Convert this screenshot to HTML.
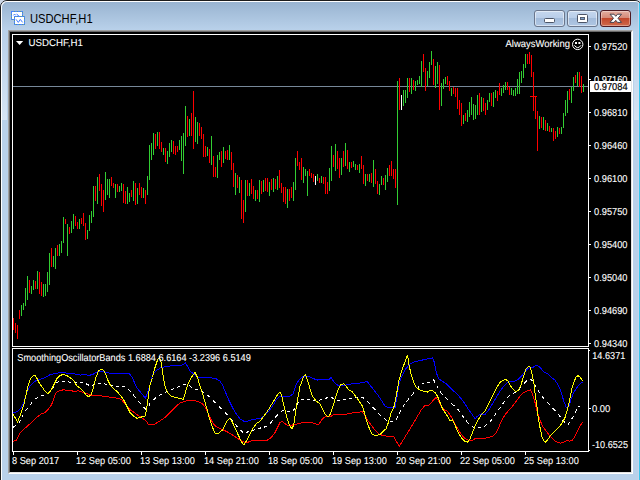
<!DOCTYPE html>
<html><head><meta charset="utf-8">
<style>
html,body{margin:0;padding:0;background:#cdd8e8;}
body{width:640px;height:480px;position:relative;overflow:hidden;font-family:"Liberation Sans",sans-serif;}
#win{position:absolute;left:0;top:0;width:642px;height:490px;box-sizing:border-box;border:1px solid #1c1c1c;border-radius:7px;background:#b9d1ea linear-gradient(#99b4d1 0px,#99b4d1 1px,#b9d1ea 29px,#b9d1ea 30px) no-repeat;}
#win:after{content:"";position:absolute;left:0;top:0;right:0;bottom:0;border-left:1px solid #fff;border-top:1px solid #fff;border-radius:6px 6px 0 0;}
#cy{position:absolute;left:638px;top:3px;width:1px;height:477px;background:#c4d5ec;}
#cy:after{content:"";position:absolute;left:1px;top:0;width:1px;height:477px;background:#3ac6ec;}
.sg{position:absolute;top:34px;height:86px;width:5px;background:linear-gradient(rgba(214,228,243,0),#d6e4f3);}
#client{position:absolute;left:8px;top:30px;width:625px;height:444px;background:#000;box-sizing:border-box;border-style:solid;border-width:2px;border-color:#a0a0a0 #fff #fff #a0a0a0;}
#client:before{content:"";position:absolute;left:-1px;top:-1px;right:-1px;bottom:-1px;border:1px solid #e3e3e3;border-left-color:#696969;border-top-color:#696969;}
#title{position:absolute;left:29.6px;top:12px;font-size:12px;line-height:14px;color:#000;white-space:nowrap;transform-origin:0 0;transform:scaleX(.93);}
.btn{position:absolute;top:10px;height:17px;width:31px;box-sizing:border-box;border:1px solid #6a768c;border-radius:3px;background:linear-gradient(#c5d7ee 0%,#b9cee9 45%,#a3bcdb 50%,#afc6e3 100%);box-shadow:inset 0 0 0 1px rgba(255,255,255,.5);}
#bclose{border-color:#4e1a22;background:linear-gradient(#e3aea1 0%,#d68a78 45%,#c2472c 50%,#cf6a4c 100%);box-shadow:inset 0 0 0 1px rgba(255,255,255,.35);}
svg{position:absolute;left:0;top:0;}
</style></head><body>
<div id="win"></div><div id="cy"></div>
<div class="sg" style="left:2px"></div><div class="sg" style="left:634px"></div>
<div id="client"></div>
<div id="title">USDCHF,H1</div>
<div class="btn" style="left:534px"></div>
<div class="btn" style="left:567px"></div>
<div class="btn" id="bclose" style="left:600px"></div>
<svg width="640" height="30" viewBox="0 0 640 30">
<!-- app icon -->
<g shape-rendering="crispEdges"><rect x="11.5" y="11.5" width="11" height="8" fill="#fff" stroke="#4a86ff"/><rect x="11.5" y="11.5" width="11" height="8" fill="none" stroke="#5c9c90" stroke-dasharray="1 2" stroke-dashoffset="1"/><rect x="14.5" y="16.5" width="10" height="8" fill="#fff" stroke="#4a86ff"/><rect x="14.5" y="16.5" width="10" height="8" fill="none" stroke="#5c9c90" stroke-dasharray="1 2" stroke-dashoffset="1"/></g>
<path d="M13.4 15.4L14.6 14 15.6 15.3M16.8 13.8L18 15.7 19.2 16" stroke="#3f7cff" fill="none" stroke-width="1"/>
<path d="M16 19.3L18.3 22.4 20.3 19.4 22.6 22.4" stroke="#3f7cff" fill="none" stroke-width="1" stroke-linejoin="round"/>
<!-- minimize glyph -->
<rect x="544.5" y="18.5" width="10" height="4" rx="1" fill="#fff" stroke="#4b5467"/>
<!-- maximize glyph -->
<rect x="577.5" y="14.5" width="10" height="8" rx="1" fill="#fff" stroke="#4b5467"/><rect x="580.5" y="17.5" width="4" height="2" fill="#7f9fc9" stroke="#4b5467" stroke-width=".9"/>
<!-- close glyph -->
<path d="M610 14.2H614L615.75 16.3 617.5 14.2H621.5L618 18.3 621.5 22.4H617.5L615.75 20.3 614 22.4H610L613.5 18.3Z" fill="#fff" stroke="#47424e" stroke-width="1" stroke-linejoin="round"/>
</svg>
<svg width="640" height="480" viewBox="0 0 640 480" font-family="'Liberation Sans',sans-serif" text-rendering="geometricPrecision">
<g shape-rendering="crispEdges">
<path d="M13 86.5H588" stroke="#778899" fill="none"/>
<path d="M21.5 305V316M23.5 303V310M25.5 288V306M27.5 276V300M31.5 286V294M33.5 280V290M37.5 271V289M43.5 284V297M45.5 284V296M47.5 272V292M49.5 253V285M53.5 256V267M55.5 248V269M59.5 244V256M61.5 241V253M63.5 217V243M67.5 224V256M71.5 221V233M73.5 214V229M79.5 219V229M87.5 230V239M89.5 215V231M91.5 211V223M93.5 186V217M97.5 177V204M105.5 172V200M107.5 179V195M109.5 179V198M115.5 184V198M119.5 186V192M121.5 183V191M127.5 187V204M129.5 193V202M133.5 181V201M137.5 188V204M143.5 188V198M147.5 176V195M149.5 145V180M151.5 143V160M153.5 133V155M157.5 132V146M163.5 148V155M167.5 151V164M169.5 143V157M171.5 140V152M179.5 140V150M181.5 136V161M183.5 133V174M185.5 106V146M189.5 119V136M195.5 117V142M197.5 122V144M207.5 147V156M211.5 136V165M217.5 155V178M219.5 152V160M223.5 147V163M229.5 145V160M235.5 173V195M239.5 177V193M245.5 180V212M249.5 183V196M255.5 190V201M259.5 180V202M263.5 180V192M269.5 182V196M273.5 178V192M277.5 176V190M287.5 189V208M293.5 182V201M295.5 158V190M303.5 167V183M305.5 169V176M307.5 171V196M317.5 174V181M321.5 176V183M329.5 168V191M331.5 146V181M335.5 144V171M341.5 158V175M345.5 143V166M349.5 162V172M353.5 161V167M355.5 164V170M359.5 164V173M365.5 174V186M369.5 174V182M373.5 160V187M379.5 184V195M381.5 176V185M385.5 175V190M387.5 168V182M397.5 81V205M403.5 90V106M405.5 90V103M407.5 78V98M411.5 78V94M415.5 81V91M417.5 80V85M419.5 76V84M421.5 61V87M427.5 71V86M429.5 62V78M431.5 51V65M435.5 66V88M437.5 62V84M441.5 83V106M443.5 79V89M445.5 77V84M451.5 88V96M463.5 115V124M467.5 110V122M469.5 102V117M471.5 97V115M473.5 104V120M475.5 105V119M477.5 95V115M481.5 97V112M487.5 100V110M489.5 93V102M493.5 92V107M495.5 90V98M501.5 88V96M503.5 85V93M505.5 82V90M511.5 88V95M513.5 90V96M515.5 88V96M517.5 79V94M519.5 72V94M521.5 71V83M523.5 64V78M525.5 54V68M539.5 116V129M543.5 117V130M547.5 123V131M551.5 128V132M557.5 127V137M561.5 127V134M563.5 113V128M565.5 100V116M567.5 91V113M571.5 87V103M573.5 77V91M577.5 72V86M583.5 84V92" stroke="#32cd32" stroke-width="1" fill="none"/>
<path d="M13.5 318V330M15.5 323V333M17.5 325V339M19.5 310V319M29.5 280V293M35.5 281V289M39.5 272V294M41.5 282V296M51.5 248V267M57.5 245V256M65.5 219V224M69.5 227V234M75.5 216V226M77.5 222V229M81.5 218V224M83.5 213V226M85.5 223V240M95.5 186V201M99.5 174V191M101.5 184V206M103.5 190V212M111.5 177V186M113.5 183V188M117.5 184V192M123.5 184V203M125.5 191V204M131.5 190V197M135.5 183V205M139.5 183V195M141.5 187V198M145.5 190V204M155.5 134V149M159.5 132V149M161.5 142V152M165.5 148V162M173.5 141V154M175.5 146V155M177.5 146V152M187.5 116V137M191.5 113V136M193.5 91V149M199.5 123V136M201.5 127V139M203.5 134V157M205.5 146V157M209.5 149V163M213.5 156V177M215.5 167V177M221.5 151V167M225.5 151V159M227.5 150V160M231.5 152V170M233.5 163V187M237.5 175V188M241.5 180V219M243.5 200V223M247.5 180V196M251.5 179V194M253.5 186V199M257.5 190V199M261.5 181V194M265.5 178V191M267.5 178V192M271.5 179V190M275.5 179V189M279.5 170V188M281.5 183V193M283.5 187V202M285.5 187V204M289.5 189V201M291.5 187V198M297.5 151V166M299.5 162V170M301.5 158V180M309.5 169V176M311.5 173V178M313.5 174V182M319.5 178V183M323.5 177V184M325.5 177V194M327.5 182V194M333.5 155V167M337.5 151V169M339.5 158V178M343.5 151V167M347.5 150V169M351.5 162V168M357.5 165V170M361.5 156V169M363.5 165V184M367.5 174V181M371.5 173V183M375.5 169V184M377.5 181V194M383.5 178V185M389.5 165V176M391.5 161V176M393.5 169V179M395.5 169V188M399.5 78V110M409.5 78V92M413.5 80V90M423.5 54V72M425.5 68V91M433.5 59V85M439.5 65V110M447.5 76V85M449.5 81V91M453.5 87V94M455.5 88V97M457.5 88V109M459.5 100V115M461.5 103V126M465.5 113V121M479.5 93V115M483.5 98V111M485.5 103V115M491.5 93V106M497.5 91V101M499.5 83V95M507.5 82V90M509.5 87V95M527.5 54V64M529.5 52V64M531.5 55V77M533.5 72V111M535.5 97V119M537.5 111V151M541.5 117V128M545.5 120V131M549.5 126V132M553.5 128V141M555.5 131V139M559.5 128V134M569.5 89V100M575.5 75V83M579.5 72V87M581.5 76V93" stroke="#ff0000" stroke-width="1" fill="none"/>
<path d="M315.5 176V185M401.5 95V110" stroke="#ffffff" stroke-width="1" fill="none"/>
<path d="M530 96.5H537" stroke="#ff0000" fill="none"/>
<g fill="none" stroke="#fff" stroke-width="1">
<path d="M12.5 346.5V34.5H588.5V346.5H12.5"/>
<path d="M12.5 451.5V348.5H588.5V451.5H12.5"/>
<path d="M589 46.5H591M589 79.5H591M589 112.5H591M589 145.5H591M589 178.5H591M589 211.5H591M589 244.5H591M589 277.5H591M589 310.5H591M589 343.5H591M589 350.5H590M589 408.5H591M589 450.5H590M13.5 452V455M77.5 452V455M141.5 452V455M205.5 452V455M269.5 452V455M333.5 452V455M397.5 452V455M461.5 452V455M525.5 452V455"/>
</g>
<rect x="590" y="81" width="41" height="11" fill="#fff"/>
</g>
<g fill="none" stroke-width="1" shape-rendering="crispEdges">
<polyline points="13.0,412.7 17.5,411.6 20.8,408.3 24.0,401.8 27.3,390.8 30.6,385.4 33.9,382.1 37.2,379.9 41.5,378.8 45.9,377.3 50.3,374.4 54.7,373.8 59.0,372.7 64.5,372.7 70.0,373.8 75.4,374.0 80.9,375.1 85.3,374.4 88.6,375.5 92.9,374.4 97.3,371.8 101.7,371.2 106.1,372.7 112.6,373.3 121.4,373.3 129.0,373.3 132.3,377.7 136.7,387.6 141.1,393.0 145.4,398.1 148.7,389.8 152.5,375.0 156.2,370.5 161.2,367.5 167.5,366.2 175.0,365.5 182.5,365.0 185.5,363.0 187.5,366.2 190.0,371.2 193.8,373.8 197.5,377.0 202.5,377.0 210.0,377.5 216.2,378.8 220.0,381.2 222.5,385.0 225.0,391.2 228.8,400.0 232.5,407.5 236.2,413.8 240.0,418.8 243.8,421.2 247.5,421.2 252.5,419.5 257.5,418.8 261.2,418.0 265.0,415.0 268.8,411.2 272.5,406.2 276.2,400.0 280.0,396.2 285.0,396.2 290.0,396.2 293.0,393.8 295.5,386.2 298.8,380.0 302.5,377.0 306.2,376.2 310.0,377.0 313.8,378.8 317.5,380.0 321.2,379.2 325.0,380.0 328.8,379.5 331.2,377.5 333.8,382.0 337.5,385.0 341.2,385.8 346.2,385.0 352.5,383.8 358.8,383.2 363.8,382.5 367.0,381.2 370.0,385.0 373.8,390.0 377.5,394.5 381.2,400.0 385.0,406.2 388.8,407.5 395.0,407.5 397.0,397.5 398.8,385.0 401.2,377.5 405.0,370.0 408.8,365.0 412.5,362.5 417.5,361.2 422.5,360.0 427.5,358.8 432.5,358.0 434.5,362.5 436.2,372.5 438.8,378.8 442.5,381.2 446.2,383.8 450.0,387.5 453.8,391.2 457.5,394.5 461.2,398.8 465.0,403.8 468.8,410.0 472.5,415.0 475.0,418.8 477.5,416.2 481.2,413.8 485.0,414.5 488.8,410.0 492.5,403.8 496.2,397.5 500.0,391.2 503.8,386.2 507.5,382.5 511.2,381.2 515.0,381.2 518.8,378.8 522.5,375.0 525.0,371.2 528.8,368.0 532.5,367.5 536.2,365.5 538.8,366.2 541.2,368.8 543.8,372.0 547.5,373.8 551.2,377.5 555.0,380.0 558.8,386.2 561.2,392.5 563.8,401.2 566.2,407.5 568.8,406.2 571.2,398.8 573.8,392.5 576.2,388.8 578.8,385.0 581.2,383.0 583.0,382.5" stroke="#0000ff"/>
<polyline points="13.0,441.6 16.4,440.1 19.7,433.5 24.0,429.1 28.4,425.2 32.8,421.5 37.2,417.1 41.5,413.8 44.8,412.7 48.1,409.4 51.4,405.1 53.6,399.6 55.8,393.0 59.0,390.8 63.4,389.8 68.9,390.4 74.3,391.3 78.7,390.8 83.1,392.6 87.5,393.7 91.8,395.2 96.2,395.2 101.7,395.9 107.2,396.8 112.6,397.4 118.1,398.5 121.4,399.6 124.7,403.3 127.9,407.2 131.2,410.5 134.5,412.7 138.9,416.0 143.2,418.6 146.5,421.5 148.7,424.8 150.0,425.0 153.8,424.5 157.5,422.5 161.2,420.0 165.0,417.5 168.8,413.8 172.5,410.0 176.2,406.2 180.0,403.0 183.8,401.8 187.5,400.5 191.2,400.0 195.0,400.8 198.8,401.8 202.5,403.8 205.5,407.5 208.8,415.0 212.5,422.5 215.5,426.2 218.8,428.0 222.5,429.5 227.5,432.0 232.5,435.0 236.2,437.5 240.0,440.0 243.8,442.0 247.5,442.5 251.2,440.8 256.2,440.5 262.5,440.5 267.5,440.0 271.2,437.5 275.0,432.5 277.5,427.5 280.0,422.5 282.0,421.2 285.0,423.8 288.8,425.8 292.5,425.0 297.5,423.8 300.0,423.2 305.0,422.5 310.0,422.0 315.0,423.8 318.8,424.5 322.5,418.8 326.2,416.2 330.0,417.0 333.8,414.5 340.0,414.2 346.2,414.2 352.5,413.0 358.8,412.5 362.0,411.2 364.5,415.0 367.5,420.0 371.2,425.0 375.0,430.0 378.8,433.8 382.5,435.5 387.5,436.2 393.8,436.2 396.2,441.2 399.2,446.2 402.5,441.2 406.2,435.0 410.0,428.8 413.8,422.5 417.5,416.2 421.2,410.0 425.0,405.5 428.8,405.0 432.5,401.2 436.2,397.5 438.8,401.2 441.2,406.2 444.5,410.0 447.5,411.2 450.0,415.0 453.8,421.2 456.2,426.2 460.0,432.5 463.8,437.5 467.5,440.0 471.2,440.8 475.0,438.8 480.0,438.0 485.0,438.2 488.8,437.5 492.5,436.2 496.2,433.0 498.8,427.5 501.2,421.2 505.0,415.0 508.8,410.0 512.5,406.2 516.2,401.2 520.0,396.2 523.8,392.5 527.5,390.8 530.5,390.0 532.5,393.8 535.0,402.5 537.5,412.5 540.0,420.0 542.5,426.2 546.2,431.2 550.0,436.2 553.8,440.0 557.5,442.5 560.5,443.2 563.8,442.0 567.0,440.5 570.0,441.2 572.5,440.0 575.0,436.2 577.5,431.2 580.0,426.2 582.5,422.0" stroke="#ff0000"/>
<path d="M13.0,427.4 13.3,427.2 14.3,426.6 15.3,425.9 16.1,425.4M18.8,423.2 19.0,422.9 19.5,421.9 20.0,420.9 20.3,420.2M21.7,417.4 21.8,417.2 22.3,416.2 22.8,415.2 23.2,414.4M25.3,411.3 25.4,411.1 26.1,410.1 26.8,409.1 27.3,408.3M29.7,405.4 29.9,405.1 30.7,404.1 31.5,403.1 32.2,402.4M35.4,399.2 35.6,399.0 36.6,398.2 37.6,397.7 38.4,397.3M41.4,396.1 41.6,396.0 42.6,395.8 43.6,395.5 44.3,395.3M47.2,394.0 47.5,393.9 48.5,393.4 49.4,392.7 50.0,392.0M52.3,389.0 52.5,388.7 53.1,387.7 53.7,386.7 54.1,385.9M56.0,383.1 56.3,382.9 57.3,382.4 58.3,381.8 59.0,381.4M62.0,381.2 62.2,381.2 63.2,381.1 64.2,381.0 65.0,381.1M68.0,381.7 68.2,381.8 69.2,382.0 70.2,382.1 71.0,382.2M74.2,382.6 74.4,382.7 75.4,382.8 76.4,382.7 77.2,382.7M80.2,382.5 80.4,382.5 81.4,382.6 82.4,382.7 83.1,382.9M86.0,383.6 86.3,383.8 87.3,384.4 88.2,384.9 89.2,385.5M92.0,385.3 92.2,385.3 93.2,385.1 94.2,384.8 95.0,384.6M98.2,383.7 98.4,383.6 99.4,383.6 100.4,383.7 101.2,383.7M104.1,383.9 104.4,383.9 105.4,384.1 106.4,384.3 107.1,384.4M110.0,385.0 110.3,385.1 111.3,385.2 112.3,385.4 113.0,385.5M116.0,386.0 116.3,386.0 117.3,386.1 118.3,386.2 119.0,386.3M122.0,386.5 122.3,386.5 123.3,386.5 124.3,386.5 125.0,386.5M128.0,388.8 128.3,389.0 129.2,390.0 130.0,391.0 130.7,391.8M133.0,394.7 133.2,394.9 133.9,395.9 134.7,396.9 135.4,397.9M137.9,400.8 138.2,401.1 139.1,402.0 140.1,403.0 140.9,403.8M143.5,406.8 143.7,407.0 144.5,408.0 145.4,409.0 146.2,408.4M148.9,405.7 149.0,405.5 149.3,404.5 149.7,403.5 149.9,402.7M152.8,400.3 153.0,400.1 154.0,399.3 155.0,398.4 155.8,397.7M158.8,395.6 159.0,395.5 160.0,395.0 161.0,394.5 161.8,394.2M164.8,392.6 165.0,392.5 166.0,392.0 167.0,391.5 167.8,391.1M170.8,390.0 171.0,389.9 172.0,389.5 173.0,389.1 173.8,388.8M176.8,387.6 177.0,387.4 178.0,387.0 179.0,386.6 179.8,386.3M182.7,385.1 183.0,385.0 184.0,384.7 185.0,384.3 185.7,384.0M188.7,385.4 189.0,385.6 190.0,386.2 191.0,386.9 191.8,387.4M194.8,389.0 195.1,389.1 196.1,389.3 197.1,389.6 197.8,389.8M200.8,391.0 201.1,391.1 202.1,391.6 203.1,392.1 203.8,392.5M206.8,394.7 207.1,394.9 208.1,395.6 209.1,396.4 209.8,397.2M212.8,400.2 213.1,400.4 214.1,401.4 215.1,402.4 215.8,403.2M218.8,406.2 219.1,406.4 220.1,407.4 221.1,408.4 221.8,409.2M224.8,412.2 225.1,412.4 226.1,413.4 227.1,414.4 227.8,415.2M230.4,418.2 230.6,418.5 231.4,419.5 232.2,420.5 232.8,421.2M235.2,424.3 235.4,424.5 236.2,425.5 237.0,426.5 237.6,427.3M240.3,430.1 240.5,430.3 241.5,431.1 242.5,432.0 243.2,432.0M246.2,432.0 246.5,432.0 247.5,432.0 248.5,431.7 249.2,431.5M252.2,430.6 252.5,430.5 253.5,430.2 254.5,429.8 255.2,429.6M258.2,428.6 258.5,428.5 259.5,428.3 260.5,428.0 261.2,427.8M264.2,427.0 264.5,427.0 265.5,426.7 266.5,426.5 267.2,426.3M270.2,423.5 270.5,423.2 271.4,422.2 272.1,421.2 272.7,420.5M275.0,417.5 275.3,417.3 276.3,416.3 277.3,415.3 278.0,414.5M281.0,411.8 281.3,411.6 282.3,410.7 283.2,410.6 284.0,410.8M287.0,411.4 287.2,411.4 288.2,411.6 289.2,411.8 290.0,412.0M293.0,410.4 293.3,410.3 294.1,409.5 294.7,408.5 295.1,407.8M296.9,404.8 297.1,404.5 297.7,403.5 298.3,402.5 298.8,401.8M301.2,399.9 301.5,399.9 302.5,399.8 303.5,399.6 304.2,399.6M307.2,399.5 307.5,399.5 308.5,399.5 309.5,399.5 310.2,399.6M313.2,400.1 313.5,400.2 314.5,400.4 315.5,400.4 316.2,400.4M319.2,400.1 319.5,400.1 320.5,399.9 321.5,399.6 322.2,399.5M325.2,398.7 325.5,398.5 326.5,398.0 327.5,397.5 328.2,397.1M331.3,397.1 331.5,397.2 332.5,397.9 333.5,398.6 334.3,399.0M337.3,400.4 337.5,400.5 338.5,400.4 339.5,400.3 340.2,400.2M343.2,399.9 343.5,399.8 344.5,399.7 345.5,399.5 346.2,399.4M349.2,398.8 349.5,398.8 350.5,398.6 351.5,398.4 352.2,398.2M355.3,397.9 355.5,397.9 356.5,397.8 357.5,397.6 358.3,397.6M361.3,397.8 361.6,397.8 362.6,397.9 363.6,398.0 364.3,398.4M367.3,401.0 367.5,401.2 368.4,402.2 369.2,403.2 369.9,404.0M372.6,407.0 372.9,407.2 373.8,408.2 374.8,409.2 375.4,410.0M377.9,412.8 378.1,413.0 379.0,414.0 380.0,415.0 381.0,416.0M384.0,418.5 384.2,418.7 385.2,419.3 386.2,420.0 387.0,420.4M390.0,422.0 390.3,421.9 391.3,421.7 392.3,421.5 392.8,421.4M396.0,419.5 396.1,419.3 396.7,418.3 397.3,417.3 397.7,416.5M399.3,413.5 399.5,413.3 400.0,412.3 400.5,411.3 400.9,410.5M402.5,407.5 402.7,407.3 403.3,406.2 404.0,405.2 404.5,404.5M406.5,401.7 406.6,401.5 407.4,400.4 408.3,399.4 408.9,398.7M411.4,395.7 411.6,395.4 412.5,394.5 413.3,393.5 414.0,392.7M416.8,389.5 417.0,389.2 417.8,388.2 418.5,387.2 419.1,386.5M421.5,383.8 421.7,383.8 422.7,383.5 423.7,383.2 424.4,383.0M427.4,382.9 427.7,382.9 428.7,382.8 429.7,382.4 430.5,381.8M433.5,379.5 433.6,379.8 434.1,380.8 434.6,381.8 435.0,382.5M436.6,385.5 436.7,385.8 437.3,386.8 437.8,387.8 438.2,388.5M439.9,391.5 440.1,391.8 441.0,392.8 442.0,393.8 442.7,394.5M445.5,397.3 445.7,397.5 446.7,398.6 447.7,399.6 448.4,400.3M451.3,403.3 451.6,403.6 452.6,404.4 453.6,405.3 454.3,405.9M457.5,408.8 457.7,409.1 458.4,410.1 459.2,411.1 459.7,411.8M461.9,414.8 462.0,415.0 462.7,416.0 463.3,417.0 463.8,417.8M466.1,420.8 466.3,421.0 467.2,422.0 468.1,423.0 468.8,423.8M471.8,426.4 472.0,426.6 473.0,427.1 474.0,427.4 474.7,427.6M477.7,427.9 477.9,427.8 478.9,427.7 479.9,427.6 480.7,427.6M483.7,426.6 484.0,426.5 485.0,426.2 486.0,425.2 486.8,424.5M489.8,422.1 490.0,422.0 490.7,421.0 491.4,420.0 491.9,419.2M494.0,416.2 494.2,416.0 494.9,415.0 495.6,414.0 496.1,413.2M498.2,410.2 498.4,410.0 499.1,409.0 499.8,408.0 500.3,407.2M502.4,404.2 502.6,404.0 503.3,403.0 504.0,402.0 504.6,401.2M507.1,398.2 507.3,398.0 508.3,397.0 509.3,396.0 510.1,395.2M513.0,393.6 513.3,393.5 514.3,393.0 515.3,392.6 516.0,392.3M518.7,389.7 518.9,389.5 519.8,388.5 520.6,387.5 521.2,386.7M524.0,383.7 524.2,383.4 525.2,382.4 526.2,381.4 527.0,380.7M529.8,379.7 530.0,379.7 531.0,379.7 532.0,380.4 533.0,381.0M534.4,384.0 534.6,384.2 535.0,385.2 535.5,386.2 535.8,387.0M537.9,390.0 538.0,390.3 538.7,391.3 539.4,392.3 539.8,392.8M541.8,395.8 542.0,396.0 542.7,397.0 543.4,398.1 544.1,398.8M546.8,401.8 547.1,402.1 548.0,403.1 548.9,404.1 549.6,404.8M552.3,407.8 552.5,408.1 553.4,409.0 554.4,410.0 555.3,411.0M558.0,414.0 558.3,414.2 559.2,415.2 559.9,416.2 560.4,416.9M562.4,419.9 562.5,420.2 563.2,421.2 564.2,421.9 565.0,422.4M568.0,424.3 568.2,424.5 568.8,423.5 569.5,422.5 570.0,421.8M571.9,418.8 572.0,418.5 572.6,417.5 573.1,416.5 573.5,415.8M575.0,412.7 575.2,412.5 575.7,411.5 576.3,410.4 576.8,409.7M578.9,406.7 579.0,406.4 579.2,406.2" stroke="#ffffff"/>
<polyline points="13.0,413.8 17.5,422.1 20.8,413.8 24.0,404.0 26.2,394.1 28.4,384.3 30.6,378.8 32.8,376.2 35.0,375.5 37.2,378.8 39.3,383.2 42.6,387.6 45.2,391.5 48.1,393.7 51.4,389.8 54.7,383.2 56.8,378.8 60.1,375.5 63.4,374.4 66.7,375.5 70.0,377.7 73.2,379.9 76.5,385.4 79.8,388.0 83.1,390.8 86.4,395.2 88.6,396.8 91.2,394.6 93.4,387.6 96.2,376.6 98.4,371.2 101.0,369.4 103.9,370.5 106.1,375.5 108.2,381.0 110.4,385.4 113.7,388.7 117.0,391.5 120.3,395.2 123.6,399.6 126.8,406.2 130.1,412.7 133.4,416.0 136.7,418.2 140.0,417.8 143.2,416.0 145.0,416.4 146.5,409.4 148.1,398.5 149.8,385.4 152.5,377.5 155.0,367.5 157.5,360.0 159.5,357.0 161.2,362.5 163.0,375.0 165.0,386.2 167.5,392.5 171.2,396.2 176.2,397.5 181.2,398.8 183.0,399.5 185.0,393.8 187.5,385.0 191.2,377.5 195.0,372.5 197.5,377.5 200.0,386.2 203.0,395.0 206.2,406.2 209.5,418.8 212.5,427.5 215.0,433.0 218.8,433.0 222.5,430.0 225.0,425.0 227.5,420.5 230.0,418.0 232.5,422.5 235.5,428.8 238.8,436.2 241.2,441.2 243.8,445.0 246.2,441.2 248.8,436.2 252.5,428.8 256.2,423.8 260.0,421.2 263.8,416.2 267.5,411.2 271.2,405.0 275.0,398.8 278.0,393.8 280.0,392.0 281.8,396.2 283.8,405.0 286.2,415.0 288.8,423.8 291.8,428.8 293.8,425.0 295.5,412.5 297.5,400.0 300.0,386.2 302.0,381.2 303.8,376.2 305.5,374.5 307.5,380.0 310.0,388.8 312.5,396.2 316.2,401.2 320.0,403.8 322.5,408.8 325.0,413.8 328.0,417.0 330.5,413.8 333.0,406.2 335.5,397.5 338.0,390.0 340.5,385.0 343.8,383.8 346.2,386.2 348.8,390.0 352.5,392.0 356.2,397.0 360.0,402.5 362.5,406.2 365.0,415.0 367.5,423.8 370.0,430.0 372.5,434.5 376.2,435.5 380.0,434.5 383.8,430.5 386.2,428.8 388.8,421.2 391.2,412.5 393.8,407.5 396.2,396.2 398.8,381.2 401.2,372.5 403.8,365.0 406.2,358.8 407.5,355.0 408.8,363.8 411.2,375.0 413.8,382.5 416.2,387.5 420.0,390.0 423.8,391.2 427.5,392.0 431.2,390.0 435.0,392.5 437.5,396.2 440.0,402.5 442.5,408.8 445.0,412.5 447.5,416.2 450.0,420.5 452.5,420.0 455.0,425.0 457.5,431.2 461.2,437.5 464.5,441.2 467.5,442.0 470.0,438.8 472.5,432.5 475.0,426.2 478.0,420.0 481.2,415.0 485.0,411.2 487.5,406.2 490.0,401.2 492.5,396.2 495.0,391.2 497.5,386.2 500.0,382.5 502.5,380.5 505.5,379.2 508.0,381.2 510.0,385.0 512.5,388.8 515.5,391.2 518.0,390.8 520.5,386.2 522.5,380.0 524.5,373.8 526.2,368.8 528.8,366.2 530.5,367.5 532.0,373.8 533.8,382.5 535.0,392.5 536.8,405.0 538.2,417.5 540.0,427.5 541.8,436.2 543.8,440.8 545.5,442.0 547.5,440.0 550.0,436.2 552.5,433.8 555.0,431.2 558.8,427.5 562.5,422.5 565.0,417.5 567.0,411.2 568.8,403.8 570.8,393.8 572.5,386.2 574.2,381.2 576.2,377.0 578.0,375.5 580.0,377.0 581.8,379.5 583.0,381.2" stroke="#ffff00"/>
</g>
<text x="594" y="49.6" font-size="10" fill="#fff" stroke="#fff" stroke-width=".1" textLength="33.5" lengthAdjust="spacingAndGlyphs">0.97520</text>
<text x="594" y="82.6" font-size="10" fill="#fff" stroke="#fff" stroke-width=".1" textLength="33.5" lengthAdjust="spacingAndGlyphs">0.97160</text>
<text x="594" y="115.6" font-size="10" fill="#fff" stroke="#fff" stroke-width=".1" textLength="33.5" lengthAdjust="spacingAndGlyphs">0.96810</text>
<text x="594" y="148.6" font-size="10" fill="#fff" stroke="#fff" stroke-width=".1" textLength="33.5" lengthAdjust="spacingAndGlyphs">0.96460</text>
<text x="594" y="181.6" font-size="10" fill="#fff" stroke="#fff" stroke-width=".1" textLength="33.5" lengthAdjust="spacingAndGlyphs">0.96100</text>
<text x="594" y="214.6" font-size="10" fill="#fff" stroke="#fff" stroke-width=".1" textLength="33.5" lengthAdjust="spacingAndGlyphs">0.95750</text>
<text x="594" y="247.6" font-size="10" fill="#fff" stroke="#fff" stroke-width=".1" textLength="33.5" lengthAdjust="spacingAndGlyphs">0.95400</text>
<text x="594" y="280.6" font-size="10" fill="#fff" stroke="#fff" stroke-width=".1" textLength="33.5" lengthAdjust="spacingAndGlyphs">0.95040</text>
<text x="594" y="313.6" font-size="10" fill="#fff" stroke="#fff" stroke-width=".1" textLength="33.5" lengthAdjust="spacingAndGlyphs">0.94690</text>
<text x="594" y="346.6" font-size="10" fill="#fff" stroke="#fff" stroke-width=".1" textLength="33.5" lengthAdjust="spacingAndGlyphs">0.94340</text>
<text x="594" y="89.8" font-size="10" fill="#000" stroke="#000" stroke-width=".1" textLength="33.6" lengthAdjust="spacingAndGlyphs" style="stroke-width:.2">0.97084</text>
<text x="592.3" y="358.6" font-size="10" fill="#fff" stroke="#fff" stroke-width=".1" textLength="33" lengthAdjust="spacingAndGlyphs">14.6371</text>
<text x="592" y="411.6" font-size="10" fill="#fff" stroke="#fff" stroke-width=".1" textLength="18.3" lengthAdjust="spacingAndGlyphs">0.00</text>
<text x="592" y="447.6" font-size="10" fill="#fff" stroke="#fff" stroke-width=".1" textLength="36" lengthAdjust="spacingAndGlyphs">-10.6525</text>
<text x="12" y="463.9" font-size="10" fill="#fff" stroke="#fff" stroke-width=".1" textLength="47.2" lengthAdjust="spacingAndGlyphs">8 Sep 2017</text>
<text x="76" y="463.9" font-size="10" fill="#fff" stroke="#fff" stroke-width=".1" textLength="54.8" lengthAdjust="spacingAndGlyphs">12 Sep 05:00</text>
<text x="140" y="463.9" font-size="10" fill="#fff" stroke="#fff" stroke-width=".1" textLength="54.8" lengthAdjust="spacingAndGlyphs">13 Sep 13:00</text>
<text x="204" y="463.9" font-size="10" fill="#fff" stroke="#fff" stroke-width=".1" textLength="54.8" lengthAdjust="spacingAndGlyphs">14 Sep 21:00</text>
<text x="268" y="463.9" font-size="10" fill="#fff" stroke="#fff" stroke-width=".1" textLength="54.8" lengthAdjust="spacingAndGlyphs">18 Sep 05:00</text>
<text x="332" y="463.9" font-size="10" fill="#fff" stroke="#fff" stroke-width=".1" textLength="54.8" lengthAdjust="spacingAndGlyphs">19 Sep 13:00</text>
<text x="396" y="463.9" font-size="10" fill="#fff" stroke="#fff" stroke-width=".1" textLength="54.8" lengthAdjust="spacingAndGlyphs">20 Sep 21:00</text>
<text x="460" y="463.9" font-size="10" fill="#fff" stroke="#fff" stroke-width=".1" textLength="54.8" lengthAdjust="spacingAndGlyphs">22 Sep 05:00</text>
<text x="524" y="463.9" font-size="10" fill="#fff" stroke="#fff" stroke-width=".1" textLength="54.8" lengthAdjust="spacingAndGlyphs">25 Sep 13:00</text>
<text x="28.5" y="46" font-size="10" fill="#fff" stroke="#fff" stroke-width=".1" textLength="54.3" lengthAdjust="spacingAndGlyphs">USDCHF,H1</text>
<text x="505.5" y="46.7" font-size="10" fill="#fff" stroke="#fff" stroke-width=".1" textLength="64.5" lengthAdjust="spacingAndGlyphs">AlwaysWorking</text>
<text x="17.3" y="360.5" font-size="10" fill="#fff" stroke="#fff" stroke-width=".1" textLength="233.5" lengthAdjust="spacingAndGlyphs">SmoothingOscillatorBands 1.6884 6.6164 -3.2396 6.5149</text>
<path d="M16 41H23.2L19.6 44.9Z" fill="#fff"/>
<g fill="none" stroke="#fff" stroke-width="1"><circle cx="577.7" cy="44.4" r="5.2"/><path d="M574.4 45.3Q577.7 50 581 45.3"/></g><rect x="575" y="42" width="2" height="2" fill="#fff"/><rect x="578.4" y="42" width="2" height="2" fill="#fff"/>
</svg>
</body></html>
